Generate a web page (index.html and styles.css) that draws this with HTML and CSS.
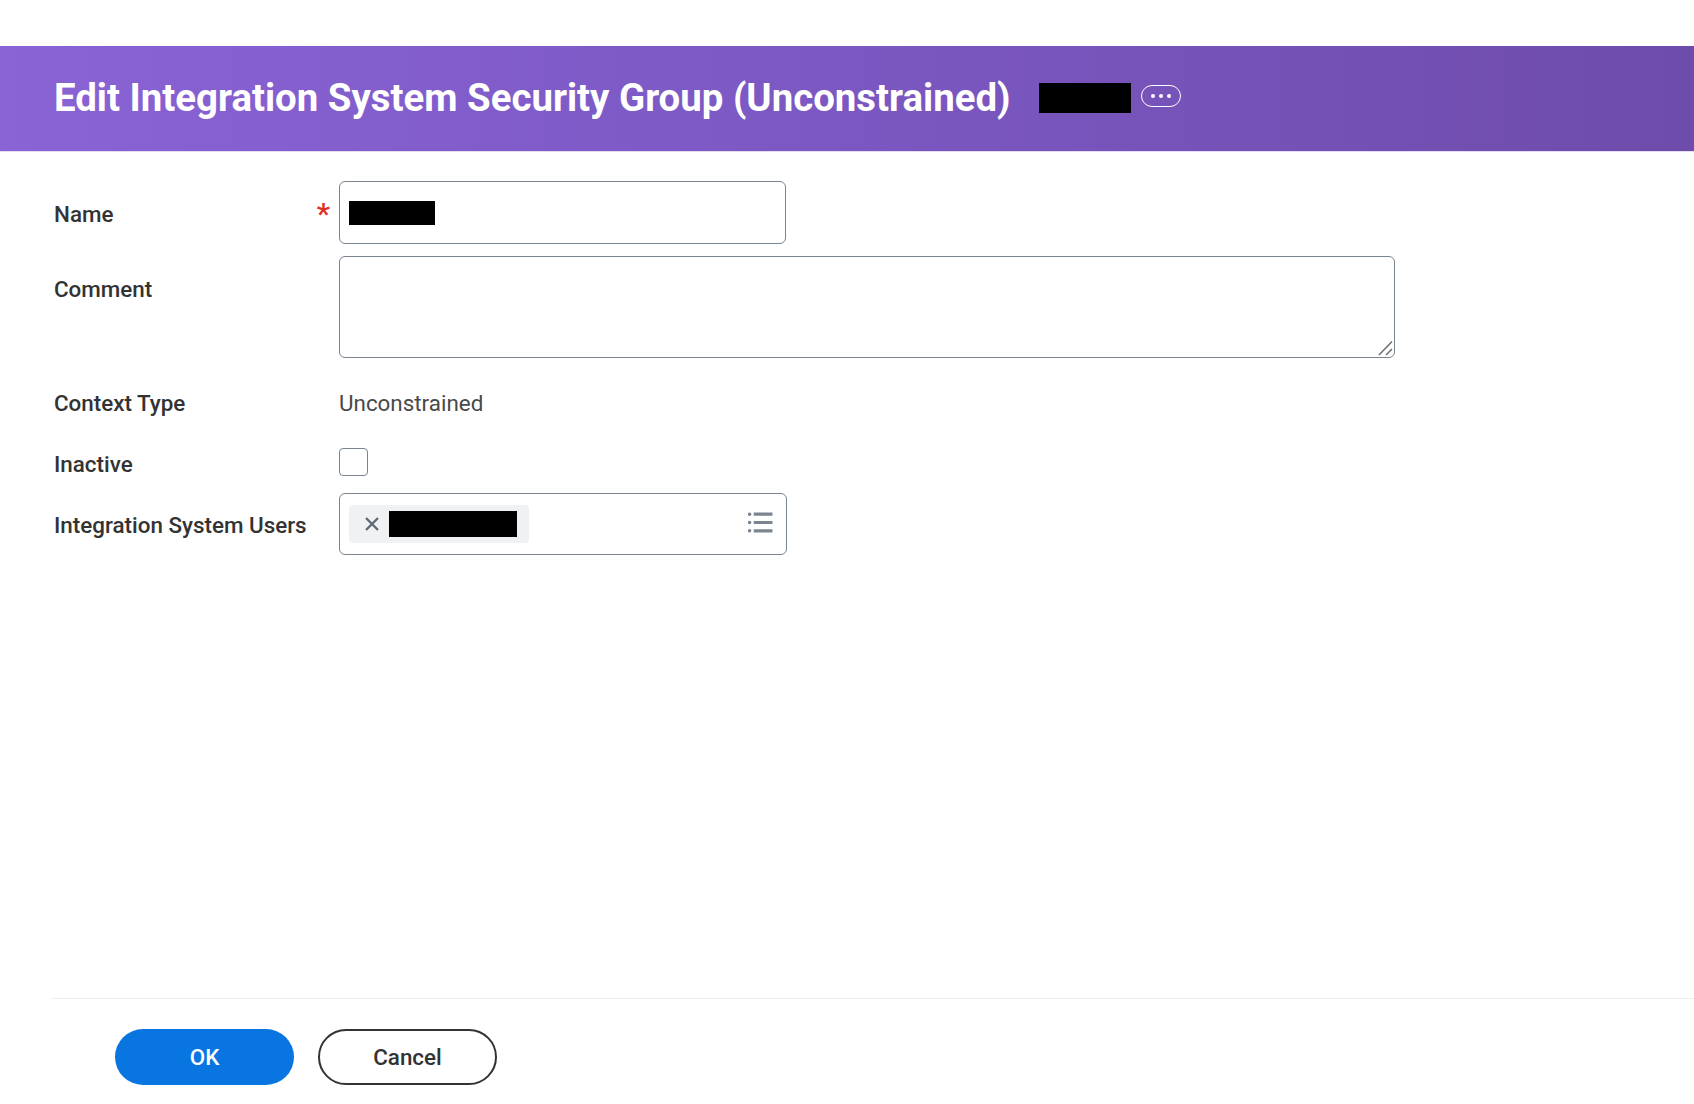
FILE: index.html
```html
<!DOCTYPE html>
<html lang="en">
<head>
  <meta charset="UTF-8">
  <title>Edit Integration System Security Group (Unconstrained)</title>
  <link rel="stylesheet" href="styles.css">
</head>
<body>
  <div class="page">
    <header class="title-bar">
      <h1>Edit Integration System Security Group (Unconstrained)</h1>
      <span class="redact title-redact"></span>
      <button class="related" type="button" aria-label="Related actions">
        <span class="dot"></span><span class="dot"></span><span class="dot"></span>
      </button>
    </header>

    <form class="edit-form">
      <div class="row">
        <label class="field-label required-label"><span>Name</span><span class="star">*</span></label>
        <div class="box name-box"><span class="redact name-redact"></span></div>
      </div>

      <div class="row">
        <label class="field-label" for="comment">Comment</label>
        <div class="comment-wrap">
          <textarea class="comment" id="comment"></textarea>
          <svg class="grip" viewBox="0 0 16 16" aria-hidden="true"><path d="M1 15L14 1.5M8 15l6-6"/></svg>
        </div>
      </div>

      <div class="row context-row">
        <div class="field-label">Context Type</div>
        <div class="value">Unconstrained</div>
      </div>

      <div class="row inactive-row">
        <label class="field-label" for="inactive">Inactive</label>
        <input class="check" id="inactive" type="checkbox">
      </div>

      <div class="row">
        <div class="field-label users-label">Integration System Users</div>
        <div class="box users-box">
          <div class="chip">
            <svg class="chip-x" viewBox="0 0 14 14" aria-hidden="true"><path d="M1 1l12 12M13 1L1 13"/></svg>
            <span class="redact chip-redact"></span>
          </div>
          <svg class="list-icon" viewBox="0 0 24 20" aria-hidden="true">
            <circle cx="1.5" cy="2" r="1.7"/><circle cx="1.5" cy="10" r="1.7"/><circle cx="1.5" cy="18" r="1.7"/>
            <path d="M5.5 2h18M5.5 10h18M5.5 18h18"/>
          </svg>
        </div>
      </div>
    </form>

    <footer class="actions">
      <button class="btn btn-primary" type="button">OK</button>
      <button class="btn btn-outline" type="button">Cancel</button>
    </footer>
  </div>
</body>
</html>
```

FILE: styles.css
```css
* {
  box-sizing: border-box;
}
body {
  margin: 0;
  background-color: #ffffff;
  color: #333333;
  font-family: 'Roboto', 'Liberation Sans', sans-serif;
}
.page {
  display: flex;
  flex-direction: column;
  min-height: 100vh;
  padding-top: 46px;
}
.redact {
  display: block;
  background-color: #000000;
}

/* title bar */
.title-bar {
  display: flex;
  align-items: center;
  height: 106px;
  padding-left: 54px;
  background: linear-gradient(90deg, #8a63d5 0%, #7f5bc8 35%, #6e4cab 100%);
  border-bottom: 1px solid #e3dcf3;
}
.title-bar h1 {
  margin: 0 0 2px;
  color: #ffffff;
  font-size: 38.4px;
  font-weight: 700;
  line-height: 48px;
}
.title-redact {
  width: 92px;
  height: 30px;
  margin: 0 0 1px 28px;
}
.related {
  display: flex;
  align-items: center;
  justify-content: center;
  gap: 4px;
  width: 40px;
  height: 22px;
  margin: 0 0 5px 10px;
  padding: 0;
  background: none;
  border: 1px solid #ffffff;
  border-radius: 11px;
}
.dot {
  width: 4px;
  height: 4px;
  border-radius: 50%;
  background-color: #ffffff;
}

/* form */
.edit-form {
  flex: 1;
  display: flex;
  flex-direction: column;
  gap: 12px;
  padding: 29px 0 0 54px;
}
.row {
  display: grid;
  grid-template-columns: 285px 1fr;
}
.field-label {
  display: block;
  padding-top: 19px;
  font-size: 22.4px;
  font-weight: 500;
  line-height: 28px;
  color: #333333;
}
.required-label {
  display: flex;
  justify-content: space-between;
  padding-right: 9px;
}
.star {
  color: #de2e21;
  font-size: 30px;
  line-height: 28px;
}
.box {
  display: flex;
  align-items: center;
  background-color: #ffffff;
  border: 1px solid #7b858f;
  border-radius: 6px;
}
.name-box {
  width: 447px;
  height: 63px;
  padding-left: 9px;
}
.name-redact {
  width: 86px;
  height: 24px;
}
.comment-wrap {
  position: relative;
  width: 1056px;
  height: 102px;
}
.comment {
  display: block;
  width: 100%;
  height: 100%;
  margin: 0;
  background-color: #ffffff;
  border: 1px solid #7b858f;
  border-radius: 6px;
  resize: none;
}
.grip {
  position: absolute;
  right: 1px;
  bottom: 2px;
  width: 16px;
  height: 16px;
  fill: none;
  stroke: #6e6e6e;
  stroke-width: 1.5;
}
.context-row {
  align-items: center;
  padding: 19px 0;
}
.context-row .field-label {
  padding-top: 0;
}
.value {
  font-size: 22.4px;
  line-height: 28px;
  color: #494949;
}
.inactive-row {
  margin-bottom: 3px;
}
.inactive-row .field-label {
  padding-top: 2px;
}
.check {
  appearance: none;
  display: block;
  width: 29px;
  height: 28px;
  margin: 0;
  background-color: #ffffff;
  border: 1px solid #7b858f;
  border-radius: 4px;
}
.users-label {
  padding-top: 18px;
}
.users-box {
  justify-content: space-between;
  width: 448px;
  height: 62px;
  padding: 0 13px 0 9px;
}
.chip {
  display: flex;
  align-items: center;
  width: 180px;
  height: 38px;
  padding-left: 16px;
  background-color: #f0f1f2;
  border-radius: 4px;
}
.chip-x {
  width: 14px;
  height: 14px;
  fill: none;
  stroke: #5e6a75;
  stroke-width: 2.4;
}
.chip-redact {
  width: 128px;
  height: 26px;
  margin-left: 10px;
}
.list-icon {
  width: 25px;
  height: 21px;
  margin-bottom: 3px;
  fill: #7b858f;
  stroke: none;
}
.list-icon path {
  fill: none;
  stroke: #7b858f;
  stroke-width: 3;
}

/* buttons */
.actions {
  display: flex;
  gap: 24px;
  height: 106px;
  margin-left: 51px;
  padding: 30px 0 0 64px;
  border-top: 1px solid #eeeeee;
}
.btn {
  width: 179px;
  height: 56px;
  border-radius: 28px;
  font-family: inherit;
  font-size: 22.4px;
  font-weight: 500;
}
.btn-primary {
  background-color: #0875e1;
  border: none;
  color: #ffffff;
}
.btn-outline {
  background-color: #ffffff;
  border: 2px solid #333333;
  color: #333333;
}
```
